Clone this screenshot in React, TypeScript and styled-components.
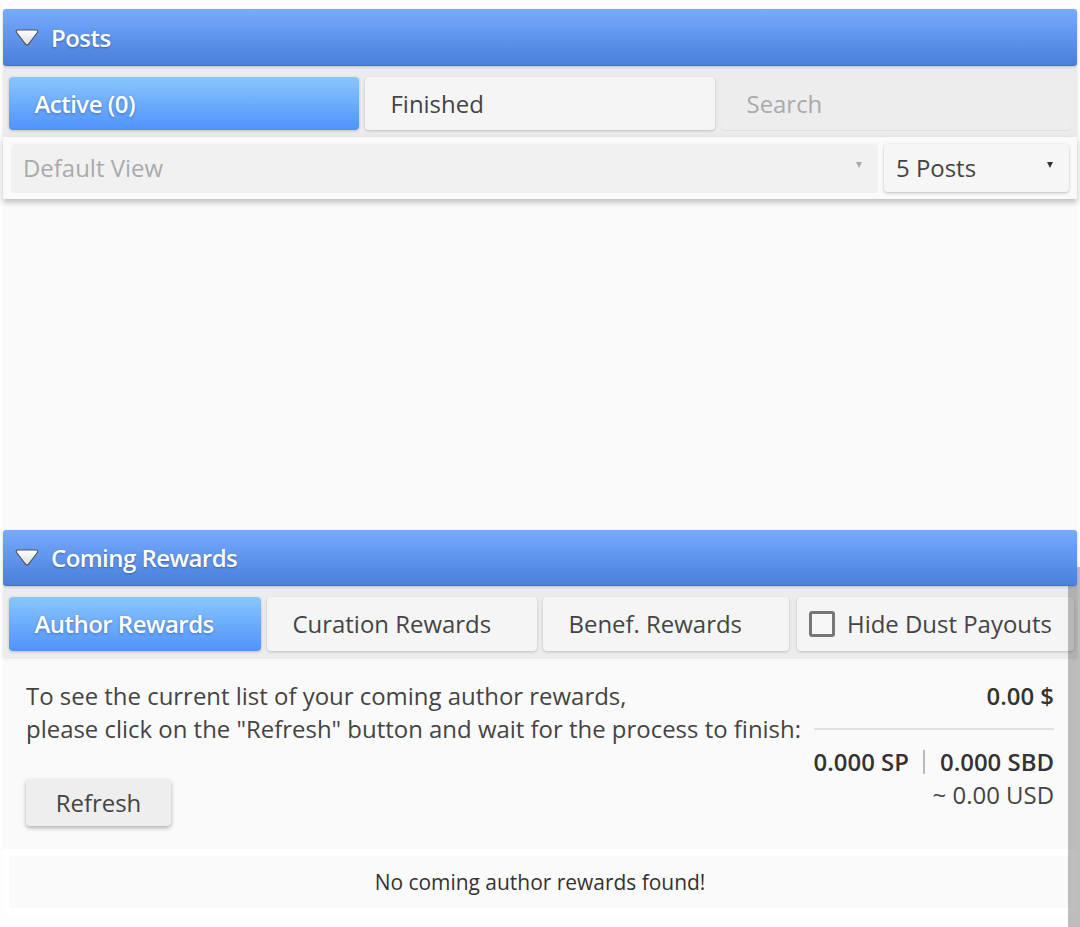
import React from "react";
import styled, { createGlobalStyle } from "styled-components";

const GlobalStyle = createGlobalStyle`
  html, body {
    margin: 0;
    padding: 0;
    background: #fdfdfd;
    font-family: "Open Sans", "Liberation Sans", sans-serif;
    color: #333;
    overflow: hidden;
  }
`;

const Page = styled.div`
  position: relative;
  width: 1080px;
  height: 927px;
  padding: 9px 3px 0;
  box-sizing: border-box;
  overflow: hidden;
`;

const Panel = styled.section`
  display: flex;
  flex-direction: column;
  background: #fafafa;
`;

const Header = styled.div<{ $height: number }>`
  display: flex;
  align-items: center;
  gap: 12px;
  height: ${(p) => p.$height}px;
  padding: 0 0 0 12px;
  box-sizing: border-box;
  border-radius: 3px;
  background: linear-gradient(to bottom, #76abff 0%, #4a7fda 100%);
  border-bottom: 1px solid #4273c8;
  box-shadow: 0 1px 3px rgba(0, 0, 0, 0.2);
  color: #fff;
  font-size: 24px;
  font-weight: 600;
  letter-spacing: -0.55px;
  text-shadow: 0 1px 2px rgba(0, 0, 0, 0.3);
  z-index: 1;
`;

const TabBar = styled.div<{ $columns: string; $bottom: number }>`
  display: grid;
  grid-template-columns: ${(p) => p.$columns};
  gap: 6px;
  height: 71px;
  padding: 11px 6px ${(p) => p.$bottom}px;
  box-sizing: border-box;
  background: #ececec;
  box-shadow: 0 1px 3px rgba(0, 0, 0, 0.12);
`;

const Tab = styled.div<{ $active?: boolean }>`
  display: flex;
  align-items: center;
  padding: 0 0 1px 25.5px;
  border-radius: 4px;
  font-size: 23.94px;
  ${(p) =>
    p.$active
      ? `
    background: linear-gradient(to bottom, #8ac6ff 0%, #4f93fb 100%);
    color: #fff;
    font-weight: 600;
    letter-spacing: -0.5px;
    text-shadow: 0 1px 3px rgba(0, 0, 0, 0.3);
    box-shadow: 0 1px 3px rgba(0, 0, 0, 0.2);
  `
      : `
    background: #f5f5f5;
    color: #444;
    box-shadow: 0 1px 3px rgba(0, 0, 0, 0.2);
  `}
`;

const SearchTab = styled(Tab)`
  background: #ededed;
  color: #aaa;
  box-shadow: 0 1px 1px rgba(0, 0, 0, 0.05);
`;

const CheckTab = styled(Tab)`
  margin: 0 -3px 0 2px;
  padding-left: 12px;
  gap: 12px;
  white-space: nowrap;
`;

const CheckBox = styled.span`
  width: 26px;
  height: 26px;
  border: 3px solid #777;
  border-radius: 3px;
  background: #f7f7f7;
  box-sizing: border-box;
`;

const FilterRow = styled.div`
  display: grid;
  grid-template-columns: 867px 185px;
  gap: 6px;
  height: 62px;
  padding: 7px 8px;
  box-sizing: border-box;
  background: #fafafa;
  box-shadow: 0 3px 6px rgba(0, 0, 0, 0.25);
`;

const Select = styled.div<{ $disabled?: boolean }>`
  display: flex;
  align-items: center;
  justify-content: space-between;
  padding: 0 16px 2px 12px;
  border-radius: 4px;
  font-size: 23.94px;
  background: ${(p) => (p.$disabled ? "#f1f1f1" : "#f6f6f6")};
  color: ${(p) => (p.$disabled ? "#aaa" : "#444")};
  box-shadow: ${(p) =>
    p.$disabled ? "0 1px 1px rgba(0,0,0,0.05)" : "0 1px 3px rgba(0,0,0,0.25)"};
`;

const Arrow = styled.span<{ $disabled?: boolean }>`
  width: 0;
  height: 0;
  margin-bottom: 4px;
  border-left: 3px solid transparent;
  border-right: 3px solid transparent;
  border-top: 6px solid ${(p) => (p.$disabled ? "#aaa" : "#333")};
`;

const EmptyList = styled.div`
  height: 331px;
`;

const RewardsBody = styled.div`
  display: flex;
  justify-content: space-between;
  height: 192px;
  padding: 22px 23px 0;
  box-sizing: border-box;
`;

const Intro = styled.div`
  display: flex;
  flex-direction: column;
  align-items: flex-start;
  font-size: 23.94px;
  line-height: 33px;
  color: #444;
`;

const RefreshButton = styled.div`
  display: flex;
  align-items: center;
  justify-content: center;
  width: 145px;
  height: 47px;
  margin-top: 34px;
  border-radius: 4px;
  background: #eee;
  color: #444;
  box-shadow: 0 2px 4px rgba(0, 0, 0, 0.3);
`;

const Totals = styled.div`
  display: flex;
  flex-direction: column;
  align-items: flex-end;
  width: 240px;
  font-size: 23.94px;
  line-height: 33px;
`;

const Strong = styled.span`
  font-weight: 600;
  color: #333;
`;

const Divider = styled.div`
  width: 100%;
  height: 2px;
  margin: 16px 0 15px;
  background: #e2e2e2;
`;

const Pipe = styled.span`
  width: 2px;
  height: 24px;
  margin: 0 15px 0 14px;
  background: #bbb;
`;

const Amounts = styled.div`
  display: flex;
  align-items: center;
  white-space: nowrap;
`;

const Usd = styled.div`
  color: #444;
`;

const Table = styled.div`
  padding: 7px 6px;
  border-radius: 4px;
  background: #fff;
`;

const EmptyRow = styled.div`
  display: flex;
  align-items: center;
  justify-content: center;
  height: 52px;
  background: #fafafa;
  font-size: 20.95px;
  color: #333;
`;

const Scrollbar = styled.div`
  position: absolute;
  top: 567px;
  right: 0;
  bottom: 0;
  width: 12px;
  background: rgba(0, 0, 0, 0.25);
`;

const Caret = () => (
  <svg width="24" height="17" viewBox="0 0 24 17">
    <defs>
      <linearGradient id="caretFill" x1="0" y1="0" x2="0" y2="1">
        <stop offset="0" stopColor="#ffffff" />
        <stop offset="1" stopColor="#dcdcdc" />
      </linearGradient>
    </defs>
    <path
      d="M3 1h18c1.500 0 2.300 1.300 1.400 2.500l-8.600 11.300c-1 1.300-2.600 1.300-3.600 0L1.600 3.500C.7 2.300 1.500 1 3 1z"
      fill="url(#caretFill)"
      stroke="#555"
      strokeWidth="1.200"
    />
  </svg>
);

export default function App() {
  return (
    <Page>
      <GlobalStyle />
      <Panel>
        <Header $height={57}>
          <Caret />
          Posts
        </Header>
        <TabBar $columns="1fr 1fr 1fr" $bottom={7}>
          <Tab $active>Active (0)</Tab>
          <Tab>Finished</Tab>
          <SearchTab>Search</SearchTab>
        </TabBar>
        <FilterRow>
          <Select $disabled>
            Default View
            <Arrow $disabled />
          </Select>
          <Select>
            5 Posts
            <Arrow />
          </Select>
        </FilterRow>
        <EmptyList />
      </Panel>
      <Panel>
        <Header $height={56}>
          <Caret />
          Coming Rewards
        </Header>
        <TabBar $columns="252px 270px 246px 276px" $bottom={6}>
          <Tab $active>Author Rewards</Tab>
          <Tab>Curation Rewards</Tab>
          <Tab>Benef. Rewards</Tab>
          <CheckTab>
            <CheckBox />
            Hide Dust Payouts
          </CheckTab>
        </TabBar>
        <RewardsBody>
          <Intro>
            <span>To see the current list of your coming author rewards,</span>
            <span>please click on the "Refresh" button and wait for the process to finish:</span>
            <RefreshButton>Refresh</RefreshButton>
          </Intro>
          <Totals>
            <Strong>0.00 $</Strong>
            <Divider />
            <Amounts>
              <Strong>0.000 SP</Strong>
              <Pipe />
              <Strong>0.000 SBD</Strong>
            </Amounts>
            <Usd>~ 0.00 USD</Usd>
          </Totals>
        </RewardsBody>
        <Table>
          <EmptyRow>No coming author rewards found!</EmptyRow>
        </Table>
      </Panel>
      <Scrollbar />
    </Page>
  );
}
